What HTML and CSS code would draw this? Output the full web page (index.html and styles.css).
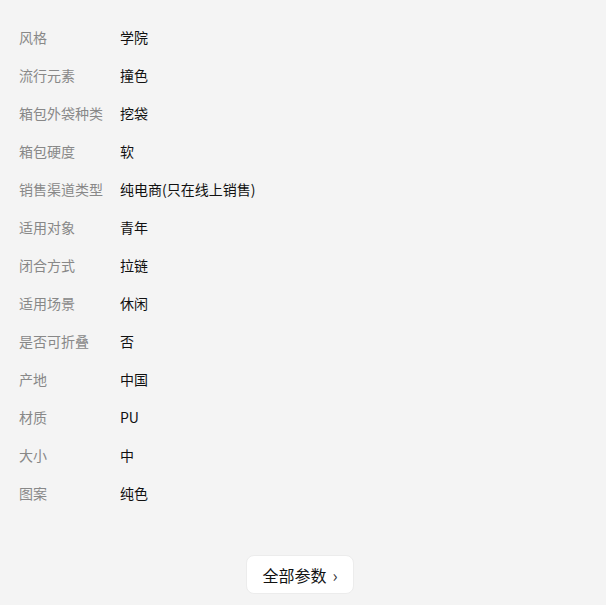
FILE: index.html
```html
<!DOCTYPE html>
<html>

<head>
    <meta charset="UTF-8">
    <title>商品参数</title>
    <link rel="stylesheet" href="styles.css">
</head>

<body>
    <div class="params">
        <div class="param-row"><span class="param-label">风格</span><span class="param-value">学院</span></div>
        <div class="param-row"><span class="param-label">流行元素</span><span class="param-value">撞色</span></div>
        <div class="param-row"><span class="param-label">箱包外袋种类</span><span class="param-value">挖袋</span></div>
        <div class="param-row"><span class="param-label">箱包硬度</span><span class="param-value">软</span></div>
        <div class="param-row"><span class="param-label">销售渠道类型</span><span class="param-value">纯电商(只在线上销售)</span></div>
        <div class="param-row"><span class="param-label">适用对象</span><span class="param-value">青年</span></div>
        <div class="param-row"><span class="param-label">闭合方式</span><span class="param-value">拉链</span></div>
        <div class="param-row"><span class="param-label">适用场景</span><span class="param-value">休闲</span></div>
        <div class="param-row"><span class="param-label">是否可折叠</span><span class="param-value">否</span></div>
        <div class="param-row"><span class="param-label">产地</span><span class="param-value">中国</span></div>
        <div class="param-row"><span class="param-label">材质</span><span class="param-value">PU</span></div>
        <div class="param-row"><span class="param-label">大小</span><span class="param-value">中</span></div>
        <div class="param-row"><span class="param-label">图案</span><span class="param-value">纯色</span></div>
    </div>
    <div class="more">
        <button class="more-button">全部参数<span class="arrow">›</span></button>
    </div>
</body>

</html>
```

FILE: styles.css
```css
body {
    font-family: "Noto Sans CJK SC", "Noto Sans", sans-serif;
    margin: 0;
    padding: 0;
    background-color: #f4f4f4;
}

.params {
    padding: 18px 19px 0;
}

.param-row {
    display: flex;
    height: 38px;
    align-items: center;
    font-size: 14px;
}

.param-label {
    width: 101px;
    color: #888;
}

.param-value {
    color: #111;
}

.more {
    display: flex;
    justify-content: center;
    padding: 43px 6px 0 0;
}

.more-button {
    display: flex;
    align-items: center;
    font-family: inherit;
    font-size: 16px;
    color: #111;
    background-color: #fff;
    border: 1px solid #ececec;
    border-radius: 8px;
    height: 39px;
    padding: 0 15px 0 15px;
    cursor: pointer;
}

.arrow {
    margin-left: 6px;
    font-size: 17px;
    color: #333;
}
```
